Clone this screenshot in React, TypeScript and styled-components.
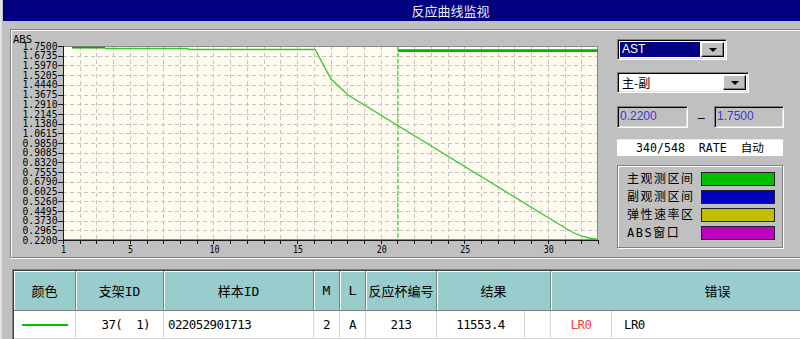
import React from "react";
import styled, { createGlobalStyle } from "styled-components";

const Global = createGlobalStyle`
  html, body { margin: 0; padding: 0; background: #c0c0c0; overflow: hidden; }
  body { width: 800px; height: 339px; }
`;

const CJK = `"Noto Sans CJK SC", sans-serif`;
const MONO = `"DejaVu Sans Mono", "Noto Sans CJK SC", monospace`;
const SANS = `"Liberation Sans", Arial, sans-serif`;

const Viewport = styled.div`
  width: 800px;
  height: 339px;
  overflow: hidden;
`;

const Window = styled.div`
  width: 898px;
  height: 339px;
  box-sizing: border-box;
  background: #c0c0c0;
  border-left: 2px solid #e2e2e2;
  display: flex;
  flex-direction: column;
  font-family: ${CJK};
`;

const TitleBar = styled.div`
  height: 21px;
  margin-left: 1px;
  background: #000080;
  color: #ececf8;
  font-size: 13px;
  line-height: 21px;
  text-align: center;
  flex-shrink: 0;
`;

const Body = styled.div`
  padding-top: 8px;
  display: flex;
  flex-direction: column;
`;

const UpperPanel = styled.div`
  margin-left: 8px;
  height: 227px;
  display: flex;
  border-top: 1px solid #808080;
  border-left: 1px solid #808080;
  border-bottom: 1px solid #808080;
  box-shadow: inset 1px 1px 0 #fff, 0 1px 0 #fff;
`;

const ChartSvg = styled.svg`
  display: block;
  flex-shrink: 0;
`;

const SidePanel = styled.div`
  display: flex;
  flex-direction: column;
  padding-top: 9px;
`;

const Sunken = styled.div<{ $w: number; $h: number; $bg: string }>`
  width: ${(p) => p.$w}px;
  height: ${(p) => p.$h}px;
  box-sizing: border-box;
  background: ${(p) => p.$bg};
  border-top: 1px solid #808080;
  border-left: 1px solid #808080;
  border-bottom: 1px solid #fff;
  border-right: 1px solid #fff;
  box-shadow: inset 1px 1px 0 #000, inset -1px -1px 0 #dfdfdf;
`;

const Combo = styled(Sunken)<{ $top: number }>`
  margin-top: ${(p) => p.$top}px;
  display: flex;
  padding: 2px;
  gap: 1px;
`;

const ComboField = styled.div<{ $selected?: boolean }>`
  flex: 1;
  background: ${(p) => (p.$selected ? "#000080" : "#fff")};
  color: ${(p) => (p.$selected ? "#fff" : "#000")};
  font-family: ${(p) => (p.$selected ? SANS : CJK)};
  font-size: 12px;
  line-height: 15px;
  padding-left: 2px;
  white-space: nowrap;
`;

const ComboButton = styled.div`
  width: 23px;
  box-sizing: border-box;
  background: #c0c0c0;
  border-top: 1px solid #fff;
  border-left: 1px solid #fff;
  border-right: 1px solid #000;
  border-bottom: 1px solid #000;
  box-shadow: inset -1px -1px 0 #808080;
  display: flex;
  align-items: center;
  justify-content: center;
`;

const Arrow = styled.span`
  width: 0;
  height: 0;
  border-left: 4px solid transparent;
  border-right: 4px solid transparent;
  border-top: 4px solid #000;
`;

const RangeRow = styled.div`
  margin-top: 13px;
  display: flex;
  align-items: center;
`;

const RangeField = styled(Sunken)`
  color: #3a3ad0;
  font-family: ${SANS};
  font-size: 12px;
  line-height: 18px;
  padding-left: 2px;
`;

const Dash = styled.span`
  width: 26px;
  text-align: center;
  font-family: ${SANS};
  font-size: 13px;
  color: #000;
`;

const StatusBox = styled.div`
  margin-top: 11px;
  width: 166px;
  height: 17px;
  background: #fff;
  border-top: 1px solid #e8e8e8;
  box-sizing: border-box;
  font-family: ${MONO};
  font-size: 11.6px;
  line-height: 16px;
  text-align: center;
  white-space: pre;
  color: #000;
`;

const Legend = styled.div`
  margin-top: 9px;
  width: 166px;
  height: 83px;
  box-sizing: border-box;
  border: 1px solid #808080;
  box-shadow: inset 1px 1px 0 #fff, 1px 1px 0 #fff;
  padding: 6px 0 0 9px;
  display: grid;
  grid-template-columns: 74px 74px;
  grid-auto-rows: 14px;
  row-gap: 4px;
  align-items: center;
`;

const LegendLabel = styled.span`
  font-family: ${MONO};
  font-size: 12px;
  letter-spacing: 1.5px;
  line-height: 14px;
  color: #000;
  white-space: nowrap;
`;

const Swatch = styled.span<{ $c: string }>`
  height: 14px;
  box-sizing: border-box;
  background: ${(p) => p.$c};
  border: 1px solid #202020;
`;

const Table = styled.div`
  margin: 11px 0 0 10px;
  padding: 1px 0 0 1px;
  display: grid;
  grid-template-columns: 62px 88px 150px 26px 26px 71px 88px 26px 61px 273px;
  grid-template-rows: 40px 28px;
  width: max-content;
  border-top: 1px solid #808080;
  border-left: 1px solid #808080;
  box-shadow: inset 1px 1px 0 #404040;
`;

const HeadCell = styled.div<{ $span?: number }>`
  grid-column: span ${(p) => p.$span ?? 1};
  box-sizing: border-box;
  background: #99cccc;
  border-right: 1px solid #808080;
  border-bottom: 1px solid #808080;
  box-shadow: inset 1px 1px 0 #fff;
  display: flex;
  align-items: center;
  justify-content: center;
  font-family: ${MONO};
  font-size: 13px;
  color: #000;
  white-space: nowrap;
  overflow: hidden;
`;

const Cell = styled.div<{ $align?: "left" | "center" | "right"; $color?: string; $pad?: number }>`
  box-sizing: border-box;
  background: #fff;
  border-right: 1px solid #d4d4d4;
  border-bottom: 1px solid #d4d4d4;
  display: flex;
  align-items: center;
  justify-content: ${(p) =>
    p.$align === "left" ? "flex-start" : p.$align === "right" ? "flex-end" : "center"};
  padding: 0 ${(p) => p.$pad ?? 0}px;
  font-family: ${MONO};
  font-size: 12.5px;
  letter-spacing: -0.6px;
  color: ${(p) => p.$color ?? "#000"};
  white-space: pre;
`;

const ColorLine = styled.span`
  width: 46px;
  height: 2px;
  background: #00c000;
`;

/* ---------- chart ---------- */
const X0 = 63;
const X1 = 598;
const Y0 = 46;
const Y1 = 240;
const xs = (u: number) => X0 + (u - 1) * ((X1 - X0) / 32);
const levels = Array.from({ length: 21 }, (_, i) => ({
  y: Y0 + i * ((Y1 - Y0) / 20),
  label: (1.75 - i * 0.0765).toFixed(4),
}));

const curve = [
  [105, 48.5],
  [188, 48.5],
  [188.5, 49.5],
  [315, 49.5],
  [331, 79],
  [348, 95],
  [548, 217.5],
  [562, 226],
  [573, 232.5],
  [583, 236.5],
  [591, 238.5],
  [597, 239.2],
]
  .map((p) => p.join(","))
  .join(" ");

function Chart() {
  return (
    <ChartSvg width={606} height={227} viewBox="11 30 606 227">
      <rect x={X0} y={Y0} width={X1 - X0} height={Y1 - Y0} fill="#fffcef" />
      <g stroke="#c4c4c4" strokeDasharray="4 3" shapeRendering="crispEdges">
        {levels.slice(1, 20).map((l, i) => (
          <line key={i} x1={X0} x2={X1} y1={Math.round(l.y) + 0.5} y2={Math.round(l.y) + 0.5} />
        ))}
        {Array.from({ length: 31 }, (_, i) => i + 2).map((u) => (
          <line key={u} x1={Math.round(xs(u)) + 0.5} x2={Math.round(xs(u)) + 0.5} y1={Y0} y2={Y1} />
        ))}
      </g>
      <rect
        x={X0 + 0.5}
        y={Y0 + 0.5}
        width={X1 - X0 - 1}
        height={Y1 - Y0 - 1}
        fill="none"
        stroke="#8a8a8a"
        shapeRendering="crispEdges"
      />
      <g stroke="#1a1a1a" shapeRendering="crispEdges">
        <line x1={X0 + 0.5} x2={X0 + 0.5} y1={Y0} y2={Y1 + 1} />
        <line x1={X0} x2={X1} y1={Y1 + 0.5} y2={Y1 + 0.5} />
        {levels.map((l, i) => (
          <line key={i} x1={58} x2={X0} y1={Math.round(l.y) + 0.5} y2={Math.round(l.y) + 0.5} />
        ))}
        {Array.from({ length: 33 }, (_, i) => i + 1).map((u) => (
          <line key={u} x1={Math.round(xs(u)) + 0.5} x2={Math.round(xs(u)) + 0.5} y1={Y1} y2={Y1 + 4} />
        ))}
      </g>
      <g fontFamily="DejaVu Sans Mono, monospace" fontSize={11} fill="#000">
        <text x={13} y={42.5} textLength={19} lengthAdjust="spacingAndGlyphs" fontSize={10}>
          ABS
        </text>
        {levels.map((l, i) => (
          <text
            key={i}
            x={57.5}
            y={l.y + 3.6}
            textAnchor="end"
            textLength={35}
            lengthAdjust="spacingAndGlyphs"
          >
            {l.label}
          </text>
        ))}
        {[1, 5, 10, 15, 20, 25, 30].map((u) => (
          <text
            key={u}
            x={xs(u) + (u >= 10 ? 1 : 0.5)}
            y={253}
            textAnchor="middle"
            textLength={u >= 10 ? 10 : 5}
            lengthAdjust="spacingAndGlyphs"
          >
            {u}
          </text>
        ))}
      </g>
      <line x1={398} x2={398} y1={Y0 + 1} y2={Y1} stroke="#3ccc3c" strokeWidth={1.2} strokeDasharray="4 2" />
      <line x1={398} x2={X1} y1={50.7} y2={50.7} stroke="#00b400" strokeWidth={2.8} />
      <line x1={72} x2={105} y1={47.6} y2={47.6} stroke="#119911" strokeWidth={1.6} />
      <polyline points={curve} fill="none" stroke="#33c833" strokeWidth={1.3} />
    </ChartSvg>
  );
}

const legendItems = [
  { label: "主观测区间", color: "#00c000" },
  { label: "副观测区间", color: "#0000c0" },
  { label: "弹性速率区", color: "#c0c000" },
  { label: "ABS窗口", color: "#c000c0" },
];

export default function App() {
  return (
    <>
      <Global />
      <Viewport>
        <Window>
          <TitleBar>反应曲线监视</TitleBar>
          <Body>
            <UpperPanel>
              <Chart />
              <SidePanel>
                <Combo $w={110} $h={21} $bg="#fff" $top={0}>
                  <ComboField $selected>AST</ComboField>
                  <ComboButton>
                    <Arrow />
                  </ComboButton>
                </Combo>
                <Combo $w={132} $h={21} $bg="#fff" $top={12}>
                  <ComboField>主-副</ComboField>
                  <ComboButton>
                    <Arrow />
                  </ComboButton>
                </Combo>
                <RangeRow>
                  <RangeField $w={71} $h={22} $bg="#c0c0c0">0.2200</RangeField>
                  <Dash>–</Dash>
                  <RangeField $w={70} $h={22} $bg="#c0c0c0">1.7500</RangeField>
                </RangeRow>
                <StatusBox>{"340/548  RATE  自动"}</StatusBox>
                <Legend>
                  {legendItems.map((it) => (
                    <React.Fragment key={it.label}>
                      <LegendLabel>{it.label}</LegendLabel>
                      <Swatch $c={it.color} />
                    </React.Fragment>
                  ))}
                </Legend>
              </SidePanel>
            </UpperPanel>
            <Table>
              <HeadCell>颜色</HeadCell>
              <HeadCell>支架ID</HeadCell>
              <HeadCell>样本ID</HeadCell>
              <HeadCell>M</HeadCell>
              <HeadCell>L</HeadCell>
              <HeadCell>反应杯编号</HeadCell>
              <HeadCell $span={2}>结果</HeadCell>
              <HeadCell $span={2}>错误</HeadCell>

              <Cell>
                <ColorLine />
              </Cell>
              <Cell $align="right" $pad={13}>{"37(  1)"}</Cell>
              <Cell $align="left" $pad={4}>022052901713</Cell>
              <Cell>2</Cell>
              <Cell>A</Cell>
              <Cell>213</Cell>
              <Cell>11553.4</Cell>
              <Cell />
              <Cell $color="#ff3b3b">LR0</Cell>
              <Cell $align="left" $pad={12}>LR0</Cell>
            </Table>
          </Body>
        </Window>
      </Viewport>
    </>
  );
}
